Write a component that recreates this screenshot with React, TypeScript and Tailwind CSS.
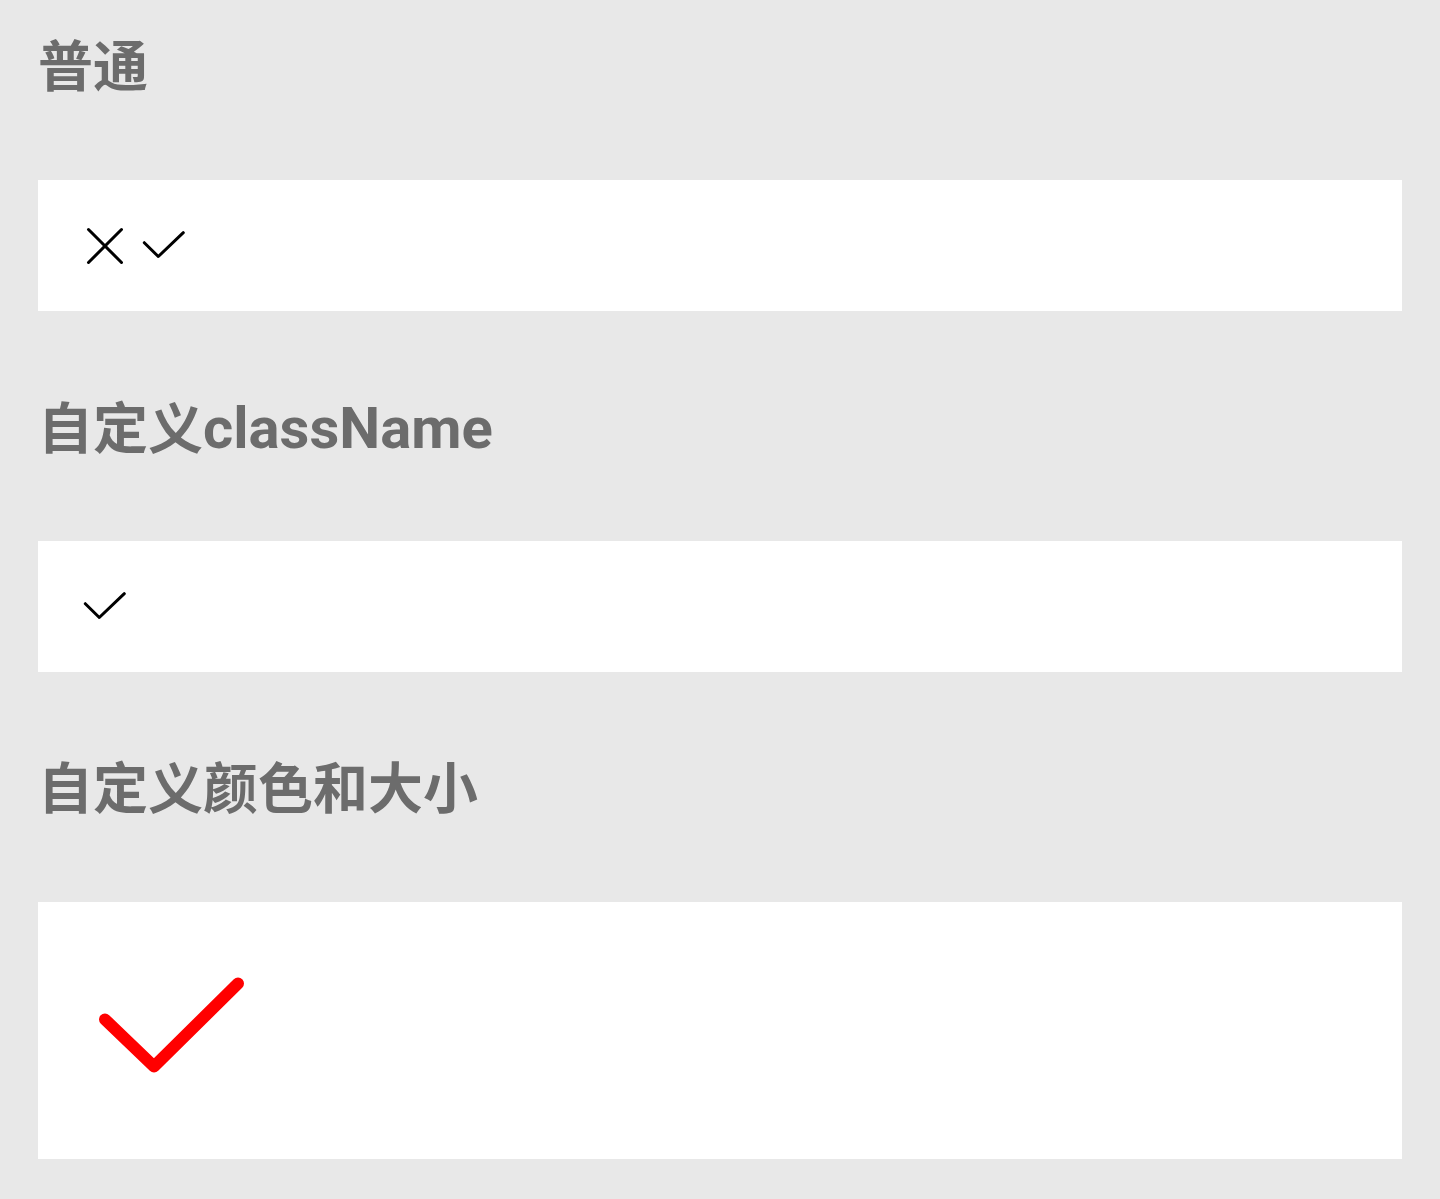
import React from 'react';

const headingFont = { fontFamily: 'Roboto, "Noto Sans CJK SC", sans-serif' };

const CrossIcon = () => (
  <svg width="44" height="44" viewBox="0 0 44 44" fill="none" stroke="#000" strokeWidth="3" strokeLinecap="round">
    <path d="M5.5 5.5L38.5 38.5M38.5 5.5L5.5 38.5" />
  </svg>
);

const CheckIcon = () => (
  <svg width="44" height="44" viewBox="0 0 44 44" fill="none" stroke="#000" strokeWidth="3" strokeLinecap="round" strokeLinejoin="round">
    <path d="M3.3 18.7L17.3 32.5L42.3 8.7" />
  </svg>
);

const BigCheck = () => (
  <svg width="170" height="120" viewBox="0 0 170 120" fill="none" stroke="#ff0000" strokeWidth="12" strokeLinecap="round" strokeLinejoin="round">
    <path d="M22 48.5L71 95.5L155 12.5" />
  </svg>
);

const Section = ({ title, first, children }: { title: React.ReactNode; first?: boolean; children: React.ReactNode }) => (
  <div className={first ? '' : 'mt-[50px]'}>
    <div className="h-[134px] flex items-center text-[55px] font-bold text-[#6c6c6c]" style={headingFont}>
      <span>{title}</span>
    </div>
    <div className="mt-[46px]">{children}</div>
  </div>
);

export default function App() {
  return (
    <div className="min-h-[1199px] bg-[#e8e8e8] px-[38px] pb-[40px]">
      <Section title="普通" first>
        <div className="h-[131px] bg-white flex items-center pl-[45px] gap-[14px]">
          <CrossIcon />
          <CheckIcon />
        </div>
      </Section>
      <Section title={<>自定义<span className="text-[58px]">className</span></>}>
        <div className="h-[131px] bg-white flex items-center pl-[44px]">
          <CheckIcon />
        </div>
      </Section>
      <Section title="自定义颜色和大小">
        <div className="h-[257px] bg-white flex items-center pl-[45px]">
          <BigCheck />
        </div>
      </Section>
    </div>
  );
}
